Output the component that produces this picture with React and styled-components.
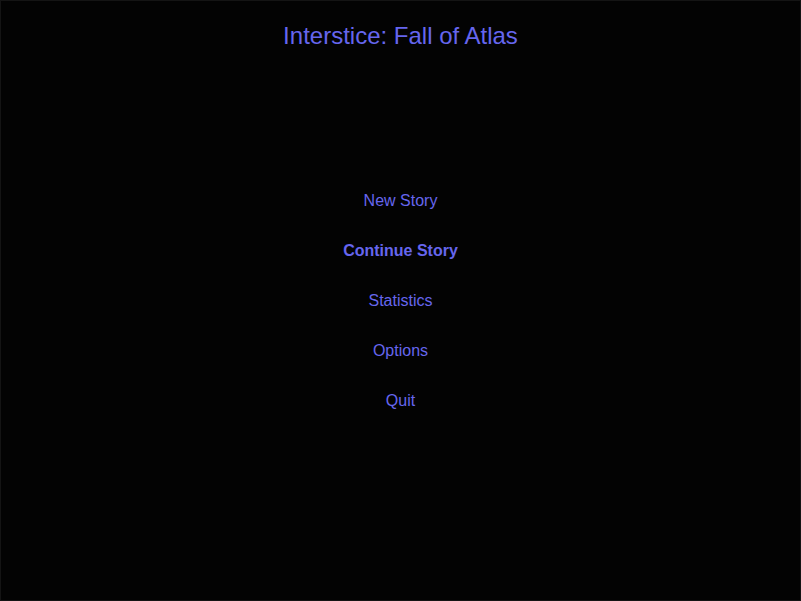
import React from 'react';
import styled, { createGlobalStyle } from 'styled-components';

const GlobalStyle = createGlobalStyle`
  html, body {
    margin: 0;
    padding: 0;
    background: #000;
  }
`;

const Screen = styled.div`
  box-sizing: border-box;
  width: 801px;
  height: 601px;
  background: #030303;
  border: 1px solid #141414;
  display: flex;
  flex-direction: column;
  align-items: center;
  font-family: "Liberation Sans", Arial, sans-serif;
  color: #6666ee;
`;

const Title = styled.h1`
  margin: 0;
  padding-top: 21px;
  font-size: 24px;
  font-weight: normal;
  line-height: 28px;
`;

const Menu = styled.ul`
  list-style: none;
  margin: 0;
  padding: 0;
  margin-top: 142px;
  display: flex;
  flex-direction: column;
  align-items: center;
  gap: 32px;
`;

const Item = styled.li`
  font-size: 16px;
  line-height: 18px;
  font-weight: ${p => (p.$active ? 'bold' : 'normal')};
  cursor: pointer;
`;

const items = ['New Story', 'Continue Story', 'Statistics', 'Options', 'Quit'];

export default function App() {
  return (
    <>
      <GlobalStyle />
      <Screen>
        <Title>Interstice: Fall of Atlas</Title>
        <Menu>
          {items.map(label => (
            <Item key={label} $active={label === 'Continue Story'}>
              {label}
            </Item>
          ))}
        </Menu>
      </Screen>
    </>
  );
}
